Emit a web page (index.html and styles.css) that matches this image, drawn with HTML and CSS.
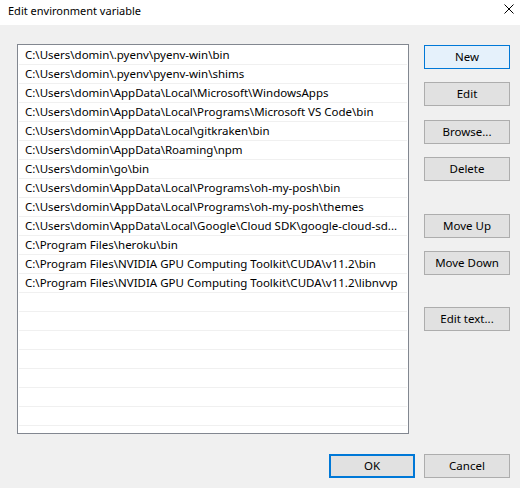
FILE: index.html
```html
<!DOCTYPE html>
<html lang="en">
<head>
<meta charset="utf-8">
<title>Edit environment variable</title>
<link rel="stylesheet" href="styles.css">
</head>
<body>
<div class="window">
  <div class="titlebar">
    <span class="title">Edit environment variable</span>
    <span class="close">
      <svg width="10" height="10" viewBox="0 0 10 10"><path d="M0.5 0.5 L9.5 9.5 M9.5 0.5 L0.5 9.5" stroke="#000" stroke-width="1" fill="none"/></svg>
    </span>
  </div>
  <div class="content">
    <div class="list">
      <div class="row">C:\Users\domin\.pyenv\pyenv-win\bin</div>
      <div class="row">C:\Users\domin\.pyenv\pyenv-win\shims</div>
      <div class="row">C:\Users\domin\AppData\Local\Microsoft\WindowsApps</div>
      <div class="row">C:\Users\domin\AppData\Local\Programs\Microsoft VS Code\bin</div>
      <div class="row">C:\Users\domin\AppData\Local\gitkraken\bin</div>
      <div class="row">C:\Users\domin\AppData\Roaming\npm</div>
      <div class="row">C:\Users\domin\go\bin</div>
      <div class="row">C:\Users\domin\AppData\Local\Programs\oh-my-posh\bin</div>
      <div class="row">C:\Users\domin\AppData\Local\Programs\oh-my-posh\themes</div>
      <div class="row">C:\Users\domin\AppData\Local\Google\Cloud SDK\google-cloud-sd...</div>
      <div class="row">C:\Program Files\heroku\bin</div>
      <div class="row">C:\Program Files\NVIDIA GPU Computing Toolkit\CUDA\v11.2\bin</div>
      <div class="row">C:\Program Files\NVIDIA GPU Computing Toolkit\CUDA\v11.2\libnvvp</div>
      <div class="row"></div>
      <div class="row"></div>
      <div class="row"></div>
      <div class="row"></div>
      <div class="row"></div>
      <div class="row"></div>
      <div class="row"></div>
    </div>
    <div class="side">
      <button class="btn default btn-new">New</button>
      <button class="btn gap-s">Edit</button>
      <button class="btn gap-m">Browse...</button>
      <button class="btn gap-s">Delete</button>
      <button class="btn gap-l">Move Up</button>
      <button class="btn gap-s">Move Down</button>
      <button class="btn gap-xl">Edit text...</button>
    </div>
  </div>
  <div class="footer">
    <button class="btn focused">OK</button>
    <button class="btn">Cancel</button>
  </div>
</div>
</body>
</html>
```

FILE: styles.css
```css
* { box-sizing: border-box; }
html, body { margin: 0; padding: 0; }
body {
  font-family: "Noto Sans", "Liberation Sans", sans-serif;
  font-size: 11.5px;
  color: #000;
  background: #f0f0f0;
}
.window {
  width: 520px;
  height: 488px;
  background: #f0f0f0;
  display: flex;
  flex-direction: column;
  overflow: hidden;
}
.titlebar {
  height: 25px;
  background: #fff;
  display: flex;
  align-items: flex-start;
  justify-content: space-between;
}
.title {
  padding-left: 8px;
  font-size: 11px;
  line-height: 21px;
  height: 21px;
}
.close {
  display: flex;
  margin-top: 4px;
  margin-right: 6px;
}
.content {
  display: flex;
  padding: 19px 10px 0 17px;
  gap: 15px;
}
.list {
  width: 392px;
  height: 390px;
  background: #fff;
  border: 1px solid #828790;
  padding-top: 1px;
  overflow: hidden;
}
.row {
  height: 19px;
  margin: 0 1px;
  border-bottom: 1px solid #f0f0f0;
  padding: 0 6px;
  line-height: 18px;
  white-space: nowrap;
  overflow: hidden;
}
.side {
  display: flex;
  flex-direction: column;
  padding-top: 1px;
}
.btn {
  width: 86px;
  height: 24px;
  font-family: inherit;
  font-size: 11.5px;
  color: #000;
  background: #e1e1e1;
  border: 1px solid #adadad;
  padding: 0;
  margin: 0;
  line-height: 20px;
}
.btn.default {
  background: #e5f1fb;
  border-color: #0078d7;
}
.btn.focused {
  border: 2px solid #0078d7;
}
.gap-s { margin-top: 13px; }
.gap-m { margin-top: 14px; }
.gap-l { margin-top: 33px; }
.gap-xl { margin-top: 32px; }
.footer {
  display: flex;
  justify-content: flex-end;
  gap: 9px;
  padding: 20px 10px 0 0;
}
```
